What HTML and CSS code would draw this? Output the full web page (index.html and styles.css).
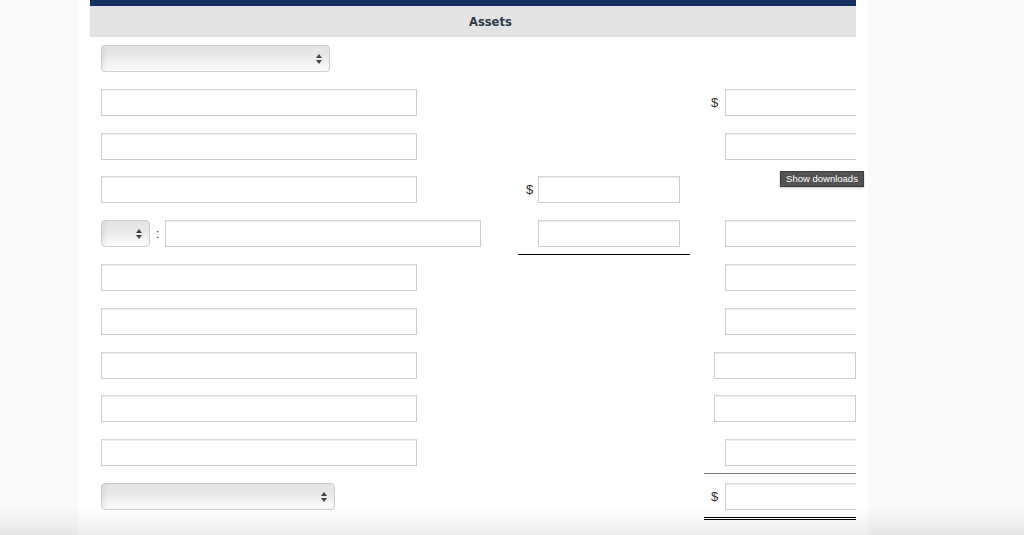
FILE: index.html
```html
<!DOCTYPE html>
<html>
<head>
<meta charset="utf-8">
<link rel="stylesheet" href="styles.css">
</head>
<body>
<div class="panel">
  <div class="inner">
    <div class="header"><span class="title">Assets</span></div>
    <div class="rows">
      <div class="row">
        <div class="lc"><div class="sel w229"><span class="arr"></span></div></div>
        <div class="mc"></div>
        <div class="rc"></div>
      </div>
      <div class="row">
        <div class="lc"><div class="inp w316"></div></div>
        <div class="mc"></div>
        <div class="rc"><span class="dol">$</span><div class="inp rinp"></div></div>
      </div>
      <div class="row">
        <div class="lc"><div class="inp w316"></div></div>
        <div class="mc"></div>
        <div class="rc"><span class="dol"></span><div class="inp rinp"></div></div>
      </div>
      <div class="row">
        <div class="lc"><div class="inp w316"></div></div>
        <div class="mc"><span class="mdol">$</span><div class="inp w142"></div></div>
        <div class="rc"></div>
      </div>
      <div class="row">
        <div class="lc"><div class="sel w49"><span class="arr"></span></div><span class="colon">:</span><div class="inp w316"></div></div>
        <div class="mc under"><span class="mdol"></span><div class="inp w142"></div></div>
        <div class="rc"><span class="dol"></span><div class="inp rinp"></div></div>
      </div>
      <div class="row">
        <div class="lc"><div class="inp w316"></div></div>
        <div class="mc"></div>
        <div class="rc"><span class="dol"></span><div class="inp rinp"></div></div>
      </div>
      <div class="row">
        <div class="lc"><div class="inp w316"></div></div>
        <div class="mc"></div>
        <div class="rc"><span class="dol"></span><div class="inp rinp"></div></div>
      </div>
      <div class="row">
        <div class="lc"><div class="inp w316"></div></div>
        <div class="mc"></div>
        <div class="rc"><div class="inp wide"></div></div>
      </div>
      <div class="row">
        <div class="lc"><div class="inp w316"></div></div>
        <div class="mc"></div>
        <div class="rc"><div class="inp wide"></div></div>
      </div>
      <div class="row">
        <div class="lc"><div class="inp w316"></div></div>
        <div class="mc"></div>
        <div class="rc rline"><span class="dol"></span><div class="inp rinp"></div></div>
      </div>
      <div class="row">
        <div class="lc"><div class="sel w234"><span class="arr"></span></div></div>
        <div class="mc"></div>
        <div class="rc rdouble"><span class="dol">$</span><div class="inp rinp"></div></div>
      </div>
    </div>
  </div>
</div>
<div class="tooltip">Show downloads</div>
<div class="fade"></div>
</body>
</html>
```

FILE: styles.css
```css
html, body {
  margin: 0;
  padding: 0;
  height: 100%;
  overflow: hidden;
}
body {
  background: #f9f9f9;
  font-family: "Liberation Sans", Arial, sans-serif;
  color: #333;
  position: relative;
}
.panel {
  margin-left: 78px;
  width: 790px;
  height: 100%;
  background: #fff;
}
.inner {
  margin: 0 12px;
  height: 100%;
  overflow: hidden;
}
.header {
  border-top: 6px solid #14305e;
  background: #e4e4e4;
  height: 31px;
  display: flex;
  align-items: center;
  padding-left: 379px;
}
.title {
  font-family: "DejaVu Sans", Verdana, sans-serif;
  font-weight: bold;
  font-size: 11.5px;
  color: #2f3b48;
}
.rows {
  padding-top: 8px;
  padding-left: 11px;
  display: grid;
  grid-auto-rows: 43.8px;
}
.row {
  display: grid;
  grid-template-columns: 417px 172px 1fr;
  align-items: start;
}
.lc {
  display: flex;
  align-items: center;
}
.mc {
  display: flex;
  align-items: center;
  justify-content: flex-end;
  padding-right: 10px;
  height: 27px;
}
.mc.under {
  padding-bottom: 7px;
  border-bottom: 1px solid #000;
}
.mdol {
  font-size: 13px;
  width: 12px;
  color: #333;
}
.rc {
  margin-left: 14px;
  display: flex;
  align-items: center;
  height: 27px;
}
.rc.rline {
  padding-bottom: 7px;
  border-bottom: 1px solid #7a7a7a;
}
.rc.rdouble {
  padding-bottom: 7px;
  border-bottom: 3px double #000;
}
.dol {
  width: 21px;
  box-sizing: border-box;
  padding-left: 7px;
  font-size: 13px;
  color: #333;
  flex: none;
}
.inp {
  box-sizing: border-box;
  height: 27px;
  border: 1px solid #cccccc;
  border-top-color: #d6d6d6;
  background: #fff;
  box-shadow: inset 0 1px 0 #eeeeee;
  flex: none;
}
.w316 { width: 316px; }
.w142 { width: 142px; }
.rinp { width: 170px; }
.wide { width: 142px; margin-left: 10px; }
.sel {
  box-sizing: border-box;
  height: 27px;
  border: 1px solid #cdcdcd;
  border-radius: 4px;
  background:
    linear-gradient(to right, rgba(0,0,0,0.05), rgba(0,0,0,0) 6px),
    linear-gradient(to bottom, #e4e4e4 0%, #e9e9e9 45%, #f6f6f6 80%, #fbfbfb 100%);
  position: relative;
  flex: none;
}
.w229 { width: 229px; }
.w234 { width: 234px; }
.w49 { width: 49px; }
.arr {
  position: absolute;
  right: 7px;
  top: 8px;
  width: 0;
  height: 0;
  border-left: 3px solid transparent;
  border-right: 3px solid transparent;
  border-bottom: 4px solid #444;
}
.arr::after {
  content: "";
  position: absolute;
  left: -3px;
  top: 6px;
  border-left: 3px solid transparent;
  border-right: 3px solid transparent;
  border-top: 4px solid #444;
}
.colon {
  width: 15px;
  text-align: center;
  font-size: 13px;
  color: #333;
  flex: none;
}
.tooltip {
  position: absolute;
  left: 780px;
  top: 171px;
  width: 84px;
  height: 16px;
  box-sizing: border-box;
  background: #525252;
  border: 1px solid #3c3c3c;
  color: #fff;
  font-family: "Liberation Sans", Arial, sans-serif;
  font-size: 9.5px;
  line-height: 14px;
  text-align: center;
  box-shadow: 0 1px 2px rgba(0,0,0,0.25);
}
.fade {
  position: absolute;
  left: 0;
  right: 0;
  bottom: 0;
  height: 28px;
  background: linear-gradient(to bottom, rgba(0,0,0,0), rgba(0,0,0,0.075));
  pointer-events: none;
}
```
